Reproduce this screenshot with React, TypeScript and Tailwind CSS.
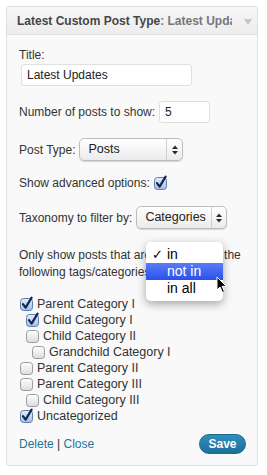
import React from "react";

function Box({ checked }: { checked?: boolean }) {
  return (
    <svg width="13" height="14" viewBox="0 0 13 14" className="shrink-0 overflow-visible">
      <defs>
        <linearGradient id="cbOff" x1="0" y1="0" x2="0" y2="1">
          <stop offset="0" stopColor="#ffffff" />
          <stop offset="1" stopColor="#dcdcdc" />
        </linearGradient>
        <linearGradient id="cbOn" x1="0" y1="0" x2="0" y2="1">
          <stop offset="0" stopColor="#e3eefb" />
          <stop offset="1" stopColor="#9fc0e8" />
        </linearGradient>
      </defs>
      <rect x="0.5" y="1.5" width="12" height="12" rx="3" fill={checked ? "url(#cbOn)" : "url(#cbOff)"} stroke={checked ? "#5f7fae" : "#9a9a9a"} />
      {checked && (
        <path d="M3 7.2 L5.6 10.6 L11.6 0.6" fill="none" stroke="#15234d" strokeWidth="2.2" strokeLinecap="round" strokeLinejoin="round" />
      )}
    </svg>
  );
}

function Arrows() {
  return (
    <svg width="6" height="10" viewBox="0 0 6 10">
      <path d="M0 4 L3 0.5 L6 4 Z M0 6 L3 9.5 L6 6 Z" fill="#2a2a2a" />
    </svg>
  );
}

function FakeSelect({ label, width, split }: { label: string; width: number; split: number }) {
  return (
    <div
      className="relative flex h-[23px] items-center rounded-[5px] border border-[#bdbdbd] bg-gradient-to-b from-white to-[#ebebeb] shadow-[0_1px_1px_rgba(0,0,0,0.15)]"
      style={{ width }}
    >
      <span className="pl-[8px] text-[12.5px] text-[#222]" style={{ width: split }}>{label}</span>
      <span className="flex h-full flex-1 items-center justify-center border-l border-[#d0d0d0]">
        <Arrows />
      </span>
    </div>
  );
}

const cats: [string, number, boolean][] = [
  ["Parent Category I", 0, true],
  ["Child Category I", 1, true],
  ["Child Category II", 1, false],
  ["Grandchild Category I", 2, false],
  ["Parent Category II", 0, false],
  ["Parent Category III", 0, false],
  ["Child Category III", 1, false],
  ["Uncategorized", 0, true],
];

export default function App() {
  return (
    <div className="min-h-[475px] bg-white pt-[6px] pl-[6px] text-[12px] text-[#333]" style={{ fontFamily: '"Liberation Sans", Arial, sans-serif' }}>
      <div className="w-[252px] overflow-hidden rounded-[3px] border border-[#dfdfdf] bg-[#f9f9f9]">
        <div className="flex h-[28px] items-center border-b border-[#dfdfdf] bg-gradient-to-b from-[#f6f6f6] to-[#ededed] pl-[10px]">
          <div className="w-[215px] overflow-hidden whitespace-nowrap font-bold text-[#464646]">
            Latest Custom Post Type<span className="text-[#777]">: Latest Upda</span>
          </div>
          <svg width="8" height="6" viewBox="0 0 8 6" className="ml-[12px] mt-[2px]">
            <path d="M0 0 L8 0 L4 6 Z" fill="#c4c4c4" />
          </svg>
        </div>

        <div className="pl-[12px] pb-[11px] pr-[13px]">
          <div className="pt-[12px] leading-[16px]">Title:</div>
          <div className="ml-[2px] mt-[1px] flex h-[22px] w-[171px] items-center rounded-[3px] border border-[#dfdfdf] bg-white pl-[5px] text-[#222]">
            Latest Updates
          </div>

          <div className="mt-[15px] flex h-[22px] items-center gap-[4px]">
            <span>Number of posts to show:</span>
            <div className="flex h-[22px] w-[51px] items-center rounded-[3px] border border-[#dfdfdf] bg-white pl-[5px] text-[#222]">5</div>
          </div>

          <div className="mt-[15px] flex h-[23px] items-center gap-[4px]">
            <span>Post Type:</span>
            <FakeSelect label="Posts" width={104} split={86} />
          </div>

          <div className="mt-[14px] flex h-[16px] items-center gap-[4px]">
            <span>Show advanced options:</span>
            <Box checked />
          </div>

          <div className="mt-[15px] flex h-[23px] items-center gap-[4px]">
            <span>Taxonomy to filter by:</span>
            <FakeSelect label="Categories" width={91} split={74} />
          </div>

          <div className="relative mt-[18px] leading-[17px]">
            <div className="flex items-center whitespace-nowrap">
              <span>Only show posts that are</span>
              <span className="mx-[4px] inline-block h-[17px] w-[65px]" />
              <span>the</span>
            </div>
            <div>following tags/categories:</div>

            <div className="absolute left-[127px] top-[-5px] w-[77px] rounded-[5px] bg-white py-[4px] text-[14px] leading-[17px] text-black shadow-[0_3px_10px_rgba(0,0,0,0.35)]">
              <div className="flex h-[17px] items-center">
                <span className="w-[21px] pl-[6px] text-[13px]">✓</span>
                <span>in</span>
              </div>
              <div className="flex h-[17px] items-center bg-gradient-to-b from-[#5a7cf5] to-[#2a50ea] pl-[21px] text-white">not in</div>
              <div className="flex h-[17px] items-center pl-[21px]">in all</div>
            </div>

            <svg width="12" height="18" viewBox="0 0 12 18" className="absolute left-[197px] top-[29px]">
              <path d="M1 1 L1 14 L4 11 L6.5 16.5 L8.5 15.5 L6 10.3 L10.3 10.3 Z" fill="#000" stroke="#fff" strokeWidth="1" strokeLinejoin="round" />
            </svg>
          </div>

          <div className="mt-[15px] pl-[1px]">
            {cats.map(([name, level, checked]) => (
              <div key={name} className="flex h-[16px] items-center gap-[4px]" style={{ paddingLeft: level === 0 ? 0 : level === 1 ? 6 : 12 }}>
                <Box checked={checked} />
                <span className="text-[12.5px] leading-[16px]">{name}</span>
              </div>
            ))}
          </div>

          <div className="mt-[10px] flex h-[20px] items-center justify-between">
            <div>
              <a className="text-[#21759b]">Delete</a>
              <span className="text-[#333]"> | </span>
              <a className="text-[#21759b]">Close</a>
            </div>
            <button className="mr-[-2px] h-[20px] w-[47px] rounded-full border border-[#1e6a8d] bg-gradient-to-b from-[#2e8fc0] to-[#1f6f98] font-bold text-white">
              Save
            </button>
          </div>
        </div>
      </div>
    </div>
  );
}
